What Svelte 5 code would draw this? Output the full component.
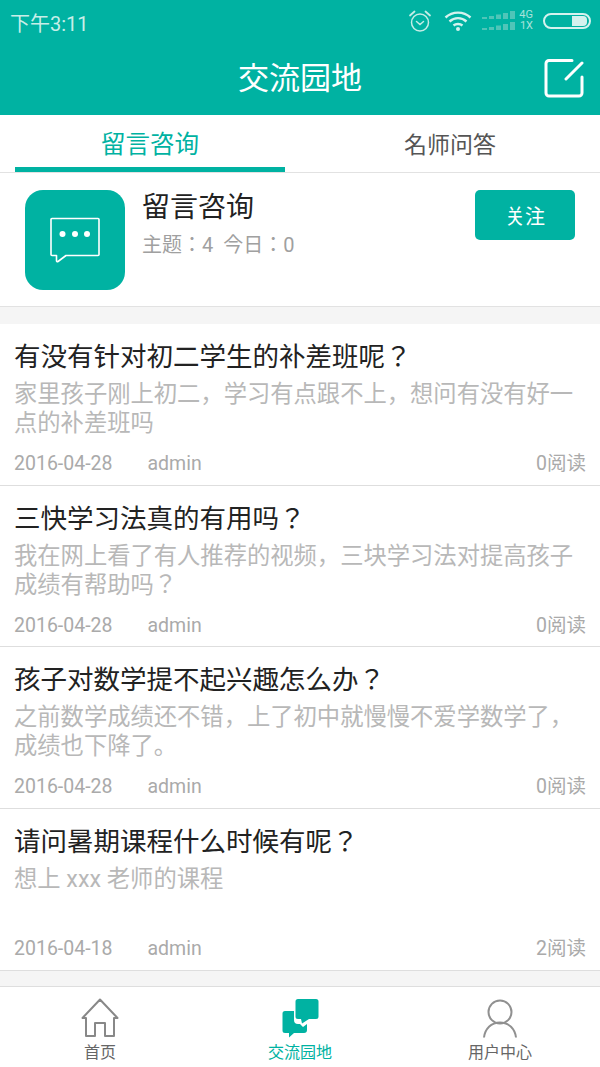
<script>
  const posts = [
    { title: '有没有针对初二学生的补差班呢？', desc: '家里孩子刚上初二，学习有点跟不上，想问有没有好一点的补差班吗', date: '2016-04-28', reads: 0 },
    { title: '三快学习法真的有用吗？', desc: '我在网上看了有人推荐的视频，三块学习法对提高孩子成绩有帮助吗？', date: '2016-04-28', reads: 0 },
    { title: '孩子对数学提不起兴趣怎么办？', desc: '之前数学成绩还不错，上了初中就慢慢不爱学数学了，成绩也下降了。', date: '2016-04-28', reads: 0 },
    { title: '请问暑期课程什么时候有呢？', desc: '想上 xxx 老师的课程', date: '2016-04-18', reads: 2 }
  ];
</script>

<div class="page">
  <header>
    <div class="status">
      <span class="time">下午3:11</span>
      <div class="status-icons">
        <svg width="26" height="24" viewBox="0 0 26 24" fill="none" stroke="#c4ece6" stroke-width="1.5">
          <circle cx="13" cy="13.500" r="8.500" />
          <path d="M9.500 12.500l3.500 3 3.500-3" stroke-linecap="round" />
          <path d="M3 6.500l4.500-4M23 6.500l-4.500-4" stroke-linecap="round" stroke-width="1.800" />
        </svg>
        <svg class="wifi" width="28" height="22" viewBox="0 0 28 22" fill="none" stroke="#d5f2ee" stroke-width="2.400">
          <path d="M1.500 7.500c7-6.500 18-6.500 25 0M5.500 11.500c5-4.500 12-4.500 17 0M9.500 15.500c2.500-2 6.500-2 9 0" />
          <circle cx="14" cy="19" r="2" fill="#d5f2ee" stroke="none" />
        </svg>
        <div class="signal">
          <div class="signal-row">
            <svg width="33" height="8" viewBox="0 0 33 8" fill="#4fc5b8"><path d="M0 6h5v2H0zM7 5h5v3H7zM14 3.500h5V8h-5zM21 2h5v6h-5zM28 0h5v8h-5z" /></svg>
            <span>4G</span>
          </div>
          <div class="signal-row">
            <svg width="33" height="8" viewBox="0 0 33 8" fill="#4fc5b8"><path d="M0 6h5v2H0zM7 5h5v3H7zM14 3.500h5V8h-5zM21 2h5v6h-5zM28 0h5v8h-5z" /></svg>
            <span>1X</span>
          </div>
        </div>
        <div class="battery"><div class="battery-fill"></div></div>
      </div>
    </div>
    <div class="titlebar">
      <h1>交流园地</h1>
      <svg class="edit" width="40" height="40" viewBox="0 0 40 40" fill="none" stroke="#fff" stroke-width="3" stroke-linecap="round" stroke-linejoin="round">
        <path d="M28 2.500H5a3 3 0 0 0-3 3V35a3 3 0 0 0 3 3h30a3 3 0 0 0 3-3V19" />
        <path d="M22 21L38 5" />
      </svg>
    </div>
  </header>

  <nav class="tabs">
    <div class="tab active"><div class="tab-label">留言咨询</div></div>
    <div class="tab"><div class="tab-label">名师问答</div></div>
  </nav>

  <section class="intro">
    <div class="intro-icon">
      <svg width="50" height="46" viewBox="0 0 50 46" fill="none" stroke="#fff" stroke-width="1.600" stroke-linejoin="round">
        <path d="M2 1.500h46a1 1 0 0 1 1 1v35a1 1 0 0 1-1 1H16l-8 6a1 1 0 0 1-1.500-1v-5H2a1 1 0 0 1-1-1v-35a1 1 0 0 1 1-1z" />
        <circle cx="12.500" cy="17" r="3" fill="#fff" stroke="none" />
        <circle cx="25" cy="17" r="3" fill="#fff" stroke="none" />
        <circle cx="37" cy="17" r="3" fill="#fff" stroke="none" />
      </svg>
    </div>
    <div class="intro-text">
      <h2>留言咨询</h2>
      <p>主题：4&nbsp; 今日：0</p>
    </div>
    <button class="follow">关注</button>
  </section>

  <main class="posts">
    {#each posts as post}
      <article>
        <h3>{post.title}</h3>
        <p class="desc">{post.desc}</p>
        <div class="meta">
          <span class="date">{post.date}</span>
          <span class="author">admin</span>
          <span class="reads">{post.reads}阅读</span>
        </div>
      </article>
    {/each}
  </main>

  <footer>
    <div class="nav-item">
      <svg width="38" height="40" viewBox="0 0 38 40" fill="none" stroke="#888" stroke-width="2" stroke-linejoin="round" stroke-linecap="round">
        <path d="M5 38V20H1.500L19 1.500 36.500 20H33v18H24V25H14v13z" />
      </svg>
      <span>首页</span>
    </div>
    <div class="nav-item current">
      <svg width="38" height="40" viewBox="0 0 38 40" fill="#00b2a2">
        <path d="M4 13h9v9a4 4 0 0 0 4 4h2l3 3 4-3v6a3 3 0 0 1-3 3H13l-5 4.500V35H4a2.500 2.500 0 0 1-2.500-2.500v-17A2.500 2.500 0 0 1 4 13z" />
        <path d="M17 1h18a2.500 2.500 0 0 1 2.500 2.500v15A2.500 2.500 0 0 1 35 21h-7l-7 4.500-1-4.500h-3a2.500 2.500 0 0 1-2.500-2.500v-15A2.500 2.500 0 0 1 17 1z" />
      </svg>
      <span>交流园地</span>
    </div>
    <div class="nav-item">
      <svg width="38" height="40" viewBox="0 0 38 40" fill="none" stroke="#909090" stroke-width="2">
        <circle cx="19" cy="14" r="11.500" />
        <path d="M3 39.500C4 31 10 24.500 19 24.500S34 31 35 39.500" />
      </svg>
      <span>用户中心</span>
    </div>
  </footer>
</div>

<style>
  :global(body) {
    background: #f5f5f5;
  }

  .page {
    width: 600px;
    height: 1067px;
    display: flex;
    flex-direction: column;
    overflow: hidden;
    font-family: Roboto, "Noto Sans CJK JP", sans-serif;
    background: #f5f5f5;
  }

  header {
    height: 115px;
    background: #00b2a2;
    color: #fff;
    flex-shrink: 0;
  }

  .status {
    height: 39px;
    display: flex;
    align-items: center;
    justify-content: space-between;
    padding: 2px 9px 0 10px;
    box-sizing: border-box;
  }

  .time {
    font-size: 20px;
    color: #c8eee8;
    margin-top: 3px;
  }

  .status-icons {
    display: flex;
    align-items: center;
  }

  .wifi {
    margin-left: 11px;
  }

  .signal {
    margin-left: 10px;
    display: flex;
    flex-direction: column;
    gap: 1px;
  }

  .signal-row {
    display: flex;
    align-items: flex-end;
    height: 10px;
    color: #a8e2da;
    font-size: 11px;
    line-height: 10px;
  }

  .signal-row svg {
    margin-bottom: 1px;
  }

  .signal-row span {
    width: 14px;
    margin-left: 4px;
    text-align: right;
  }

  .battery {
    margin-left: 10px;
    width: 42px;
    border: 2px solid #d5f2ee;
    border-radius: 9px;
    display: flex;
    justify-content: flex-end;
    padding: 1px 2px 1px 0;
    box-sizing: content-box;
    height: 10px;
  }

  .battery-fill {
    width: 15px;
    background: #d5f2ee;
    border-radius: 0 4px 4px 0;
  }

  .titlebar {
    height: 76px;
    box-sizing: border-box;
    padding-bottom: 4px;
    display: flex;
    align-items: center;
    justify-content: center;
    position: relative;
  }

  h1 {
    margin: 0;
    font-size: 31px;
    font-weight: 400;
  }

  .edit {
    position: absolute;
    right: 16px;
    top: 19px;
  }

  .tabs {
    height: 58px;
    flex-shrink: 0;
    display: flex;
    box-sizing: border-box;
    background: #fff;
    border-bottom: 1px solid #e2e2e2;
  }

  .tab {
    width: 50%;
    padding: 0 15px;
    box-sizing: border-box;
  }

  .tab-label {
    height: 100%;
    display: flex;
    align-items: center;
    justify-content: center;
    box-sizing: border-box;
    padding-bottom: 1px;
    font-size: 23px;
    color: #555;
  }

  .active .tab-label {
    padding: 3px 0 0;
    font-size: 24.500px;
    color: #00b2a2;
    border-bottom: 5px solid #00b2a2;
  }

  .intro {
    height: 134px;
    box-sizing: border-box;
    background: #fff;
    border-bottom: 1px solid #e2e2e2;
    display: flex;
    padding: 17px 25px 0;
    flex-shrink: 0;
  }

  .intro-icon {
    width: 100px;
    height: 100px;
    border-radius: 18px;
    background: #00b2a2;
    display: flex;
    align-items: center;
    justify-content: center;
  }

  .intro-text {
    flex: 1;
    margin-left: 17px;
  }

  h2 {
    margin: 0;
    font-size: 28px;
    font-weight: 400;
    line-height: 36px;
    color: #222;
  }

  .intro-text p {
    margin: 4px 0 0;
    font-size: 20px;
    line-height: 30px;
    color: #a0a0a0;
  }

  .follow {
    width: 100px;
    height: 50px;
    border: 0;
    border-radius: 5px;
    background: #00b2a2;
    color: #fff;
    font: inherit;
    font-size: 20px;
  }

  .posts {
    margin-top: 17px;
    display: flex;
    flex-direction: column;
  }

  article {
    height: 161.670px;
    box-sizing: border-box;
    background: #fff;
    border-bottom: 1px solid #dedede;
    padding: 15px 14px 0;
  }

  h3 {
    margin: 0;
    font-size: 26.500px;
    font-weight: 400;
    line-height: 36px;
    color: #222;
  }

  .desc {
    margin: 5px 0 0;
    height: 58px;
    font-size: 23.300px;
    line-height: 29px;
    color: #b8b8b8;
  }

  .meta {
    margin-top: 13px;
    display: flex;
    font-size: 19.500px;
    line-height: 26px;
    color: #aaa;
  }

  .author {
    margin-left: 35px;
  }

  .reads {
    margin-left: auto;
  }

  footer {
    margin-top: 15.300px;
    flex: 1;
    background: #fff;
    border-top: 1px solid #dedede;
    display: flex;
  }

  .nav-item {
    flex: 1;
    display: flex;
    flex-direction: column;
    align-items: center;
    padding-top: 11px;
    font-size: 16px;
    color: #666;
  }

  .nav-item span {
    line-height: 22px;
    margin-top: 4px;
  }

  .nav-item.current {
    color: #00b2a2;
  }
</style>
